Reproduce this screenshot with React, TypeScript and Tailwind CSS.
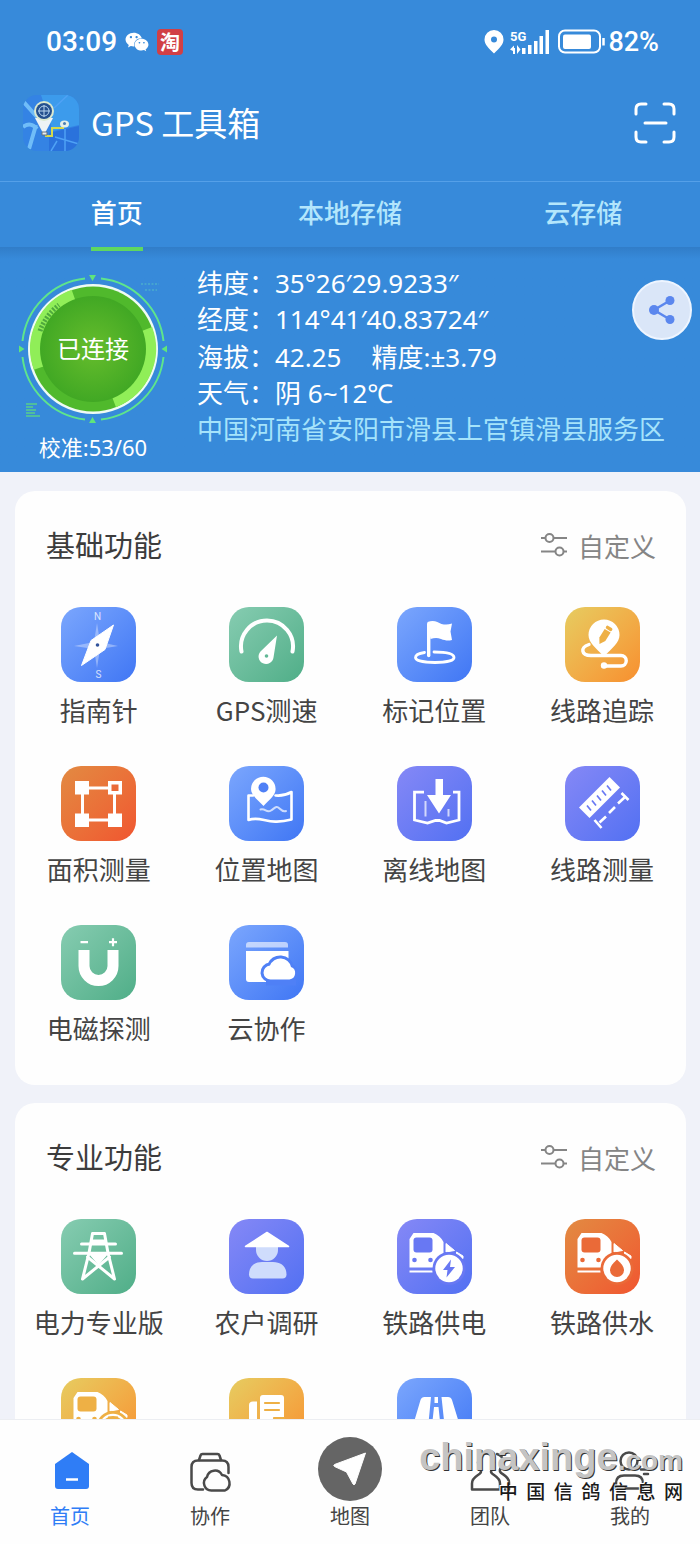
import type { ReactNode } from 'react'
import { FaWeixin } from 'react-icons/fa'

type Tone = 'blue' | 'green' | 'amber' | 'orange' | 'indigo'

interface Feature {
  name: string
  tone: Tone
  icon: ReactNode
  hideLabel?: boolean
}

const TONES: Record<Tone, string> = {
  blue: 'bg-linear-to-br from-[#7ba6fd] to-[#4076f4] text-[#4f80f6]',
  green: 'bg-linear-to-br from-[#86ccb1] to-[#4fae88] text-[#62b896]',
  amber: 'bg-linear-to-br from-[#e6cc60] to-[#f78f2e] text-[#eeb045]',
  orange: 'bg-linear-to-br from-[#e28a42] to-[#f05530] text-[#ea6a38]',
  indigo: 'bg-linear-to-br from-[#8588f6] to-[#5270f2] text-[#6878f3]',
}

const Tile = ({ children }: { children: ReactNode }) => (
  <svg viewBox="0 0 75 75" className="size-full" fill="none" aria-hidden="true">
    {children}
  </svg>
)

/* ---------- Iconos de funciones ---------- */

const CompassIcon = (
  <Tile>
    <path d="M36 16l3 19 18 4-18 3-3 19-3-19-20-3 20-4z" fill="#fff" opacity=".35" />
    <path d="M20.500 58.500L30 33.500 52.500 18 44 42.500z" fill="#fff" stroke="#fff" strokeLinejoin="round" />
    <circle cx="36.500" cy="38" r="1.800" fill="#33549c" />
    <text x="36.500" y="12.500" fontSize="10" fontFamily="Roboto, sans-serif" textAnchor="middle" fill="#fff" opacity=".75">N</text>
    <text x="37.500" y="70.500" fontSize="10" fontFamily="Roboto, sans-serif" textAnchor="middle" fill="#fff" opacity=".75">S</text>
  </Tile>
)

const GaugeIcon = (
  <Tile>
    <path d="M12.500 44.500A26 26 0 1 1 63.500 44.500" stroke="#fff" strokeWidth="4" strokeLinecap="round" />
    <path d="M48 28.500L44.500 50.500A7.500 7.500 0 1 1 31.500 44.500z" fill="#fff" />
    <circle cx="37.500" cy="49" r="1.800" fill="currentColor" />
  </Tile>
)

const FlagIcon = (
  <Tile>
    <path d="M37 45c11 0 20 1.500 20 5.500 0 3-8 5-19 5s-19.500-2-19.500-5c0-2.500 4-4.300 9-5" stroke="#fff" strokeWidth="2.800" strokeLinecap="round" />
    <path d="M31.700 17v31.500" stroke="#fff" strokeWidth="3.400" strokeLinecap="round" />
    <path d="M30.500 15c7-2.500 10 .5 14 2 4 1 7 .7 10.500-.5l-1.500 8 1.500 8.500c-4 1-7 .5-11-1s-7-1-10.500 0z" fill="#fff" />
  </Tile>
)

const RouteIcon = (
  <Tile>
    <path d="M24 37.500c-9 3-8 11 2 11h30a5 5 0 0 1 0 10.500H40" stroke="#fff" strokeWidth="3.400" strokeLinecap="round" />
    <path d="M39 49.500C31 41 23.500 36 23.500 28a15.500 15.500 0 0 1 31 0C54.500 36 47 41 39 49.500z" fill="#fff" />
    <g transform="translate(40 28) rotate(32)" fill="currentColor">
      <rect x="-3.500" y="-9.500" width="7" height="3.500" rx="1.500" />
      <path d="M-3.500-5h7V5L0 10.500-3.500 5z" />
    </g>
    <circle cx="39" cy="58.500" r="3.200" fill="#fff" />
  </Tile>
)

const AreaIcon = (
  <Tile>
    <path d="M21.500 22h32v32h-32z" stroke="#fff" strokeWidth="3" />
    <path d="M14 15h14v13.500H14zM14 47.500h14V61H14zM47 47.500h14V61H47zM47 15h14v13.500H47z" fill="#fff" />
    <path d="M50.500 18.500h7V25h-7z" fill="currentColor" />
  </Tile>
)

const MapPinIcon = (
  <Tile>
    <path d="M24 29.500h-4.500V54c13-5 19 6 43-.5V26c-7 4-11 4-16 3.500" stroke="#fff" strokeWidth="2.600" strokeLinejoin="round" strokeLinecap="round" />
    <path d="M31.500 43.500c5-1.500 6 4 10.500 1s5.500-5 8.500-2c2 2 4 3.500 6.500 2.500" stroke="#fff" strokeWidth="2" strokeLinecap="round" opacity=".7" />
    <path d="M34.500 40C28 33 22 29 22 23a12.300 12.300 0 0 1 24.600 0C46.600 29 41 33 34.500 40z" fill="#fff" />
    <circle cx="34.500" cy="21.500" r="5" fill="currentColor" />
  </Tile>
)

const OfflineMapIcon = (
  <Tile>
    <path d="M27 26.200h-9.500V54l13 3 8-2.700 4 .2 7 2.500 12.500-3V26.200H56" stroke="#fff" strokeWidth="2.800" />
    <path d="M28.500 35v15.500M51.500 43v7.500" stroke="#fff" strokeWidth="2" opacity=".7" />
    <path d="M38.500 13h7.500v16h8L42 47.500 30 29h8.500z" fill="#fff" />
  </Tile>
)

const RulerIcon = (
  <Tile>
    <path d="M14 41.500L44.500 11 55 21.500 24.500 52z" fill="#fff" />
    <path d="M22 39.500l4 5M27 34.500l4 5M32 29.500l4 5M37 24.500l4 5M42 19.500l4 5" stroke="currentColor" strokeWidth="1.700" />
    <path d="M34.500 56.500l6.500-6M44 47l6-6M53 37.500l6.500-6" stroke="#fff" strokeWidth="2.600" />
    <path d="M29.500 54l7 8M56.500 27l7 7" stroke="#fff" strokeWidth="2.600" />
  </Tile>
)

const MagnetIcon = (
  <Tile>
    <path d="M23 25v16a14.500 14.500 0 0 0 29 0V25" stroke="#fff" strokeWidth="11" />
    <path d="M19.500 17.200H27M48 17.200h8M52 13.200v8" stroke="#fff" strokeWidth="2.200" />
  </Tile>
)

const CloudFolderIcon = (
  <Tile>
    <path d="M17 22.500V20q0-3 3-3h36q3 0 3 3v2.500z" fill="#fff" opacity=".6" />
    <path d="M17 26h42.500v31H20q-3 0-3-3z" fill="#fff" />
    <path
      d="M42 54.500a7 7 0 0 1-1-14 11 11 0 0 1 21 1.500 6.500 6.500 0 0 1-1.500 12.500z"
      fill="#fff"
      stroke="currentColor"
      strokeWidth="6"
    />
    <path d="M37 57.500h30" stroke="currentColor" strokeWidth="6" />
    <path d="M42 54.500a7 7 0 0 1-1-14 11 11 0 0 1 21 1.500 6.500 6.500 0 0 1-1.500 12.500z" fill="#fff" />
  </Tile>
)

const TowerIcon = (
  <Tile>
    <path d="M20.500 25h34M13.500 34.300h47" stroke="#fff" strokeWidth="3" strokeLinecap="round" />
    <path d="M31.500 14.500h12L47 34l6.500 26-27-22M31.500 14.500L28 34l-6.500 26 27-22" stroke="#fff" strokeWidth="3" strokeLinejoin="round" strokeLinecap="round" />
    <path d="M30 20.500h15V25H30zM27 34h21l-10.500 12z" fill="#fff" />
  </Tile>
)

const FarmerIcon = (
  <Tile>
    <path d="M27 28h22v3a11 11 0 0 1-22 0z" fill="#cfdcfc" />
    <path d="M20 55.500c0-8 5-12.500 13-12.500h11c8 0 13.500 4.500 13.500 12.500 0 2.500-1.500 4-4 4H24c-2.500 0-4-1.500-4-4z" fill="#cfdcfc" />
    <path d="M38 13.500L59.500 27.500h-43z" fill="#fff" stroke="#fff" strokeWidth="1.500" strokeLinejoin="round" />
  </Tile>
)

const TrainBody = () => (
  <>
    <path d="M12.500 48.500V20L16.500 14h20c4 1.500 8 5 10 9v12c-5 2-9 7-9 13.500z" fill="#fff" />
    <path d="M49 24.500l8.500 7-8.500 1.500zM59.500 33l6.500 4v2.500l-6.500-3.500z" fill="#fff" stroke="#fff" strokeLinejoin="round" />
    <rect x="16.500" y="18.500" width="19" height="15" rx="3" fill="currentColor" />
    <circle cx="17.500" cy="41" r="2.300" fill="currentColor" />
    <circle cx="33.500" cy="41" r="2.300" fill="currentColor" />
    <path d="M12.500 52.500h23" stroke="#fff" strokeWidth="2" />
    <circle cx="52" cy="49.500" r="16.500" fill="currentColor" />
    <circle cx="52" cy="49.500" r="13.700" fill="#fff" />
  </>
)

const TrainPowerIcon = (
  <Tile>
    <TrainBody />
    <path d="M54 40.500l-8 10.500h4.500l-1 7.500 8.500-10.500h-5z" fill="currentColor" />
  </Tile>
)

const TrainWaterIcon = (
  <Tile>
    <TrainBody />
    <path d="M52 40.500c4 3.500 7 7 7 10.500a7 7 0 0 1-14 0c0-3.500 3-7 7-10.500z" fill="currentColor" />
  </Tile>
)

const TrainServiceIcon = (
  <Tile>
    <TrainBody />
    <circle cx="52" cy="49.500" r="10.500" stroke="currentColor" strokeWidth="2" />
    <path d="M47 40h10" stroke="currentColor" strokeWidth="3" />
  </Tile>
)

const NewsIcon = (
  <Tile>
    <path d="M20 56V27q0-3.500 4-3.500h4V56z" fill="#fff" />
    <rect x="31" y="17" width="24" height="42" rx="3" fill="#fff" />
    <path d="M36 25h14M36 32h14M45 40h10" stroke="currentColor" strokeWidth="2.200" strokeLinecap="round" />
  </Tile>
)

const RoadIcon = (
  <Tile>
    <path d="M23.500 22q1-3 4-3H34l-4 42H12zM55 22q-1-3-4-3h-6.500L49 61h18z" fill="#fff" />
    <path d="M37.500 19h3.500v6h-3.500zM37 29h4.500l1.500 14h-7.500z" fill="#fff" />
  </Tile>
)

const BASIC_FEATURES: Feature[] = [
  { name: '指南针', tone: 'blue', icon: CompassIcon },
  { name: 'GPS测速', tone: 'green', icon: GaugeIcon },
  { name: '标记位置', tone: 'blue', icon: FlagIcon },
  { name: '线路追踪', tone: 'amber', icon: RouteIcon },
  { name: '面积测量', tone: 'orange', icon: AreaIcon },
  { name: '位置地图', tone: 'blue', icon: MapPinIcon },
  { name: '离线地图', tone: 'indigo', icon: OfflineMapIcon },
  { name: '线路测量', tone: 'indigo', icon: RulerIcon },
  { name: '电磁探测', tone: 'green', icon: MagnetIcon },
  { name: '云协作', tone: 'blue', icon: CloudFolderIcon },
]

const PRO_FEATURES: Feature[] = [
  { name: '电力专业版', tone: 'green', icon: TowerIcon },
  { name: '农户调研', tone: 'indigo', icon: FarmerIcon },
  { name: '铁路供电', tone: 'indigo', icon: TrainPowerIcon },
  { name: '铁路供水', tone: 'orange', icon: TrainWaterIcon },
  { name: '铁路', tone: 'amber', icon: TrainServiceIcon, hideLabel: true },
  { name: '资讯', tone: 'amber', icon: NewsIcon, hideLabel: true },
  { name: '公路', tone: 'blue', icon: RoadIcon, hideLabel: true },
]

const StatusBar = () => (
  <div className="flex h-[84px] items-center justify-between pr-[41px] pl-[46px] font-['Roboto','Noto_Sans_CJK_SC',sans-serif]">
    <div className="flex items-center gap-2">
      <span className="text-[28px] leading-8 font-medium">03:09</span>
      <FaWeixin className="size-6" />
      <span className="flex h-[26px] w-[26px] items-center justify-center rounded-sm bg-[#d13f45] font-['Noto_Sans_CJK_SC',sans-serif] text-xl leading-5 font-bold">
        淘
      </span>
    </div>
    <div className="flex items-center">
      <svg width="20" height="24" viewBox="0 0 20 24" aria-hidden="true">
        <path d="M10 0a9.500 9.500 0 0 1 9.500 9.500c0 5-4 8.500-9.500 14-5.500-5.500-9.500-9-9.500-14A9.500 9.500 0 0 1 10 0z" fill="#fff" />
        <circle cx="10" cy="9.500" r="3" fill="#378ada" />
      </svg>
      <svg width="40" height="26" viewBox="0 0 40 26" className="ml-1.5" fill="#fff" aria-hidden="true">
        <text x="0" y="12" fontSize="13" fontWeight="700" fontFamily="Roboto, sans-serif">5G</text>
        <path d="M0 20.500l4-4v2.500h1V25H3v-3zM7 16v9l3.500-4.500z" />
        <path d="M12 19h3.500v6H12zM18 16h3.500v9H18zM24 12h3.500v13H24zM29.500 7H33v18h-3.500zM35.500 1H39v24h-3.500z" />
      </svg>
      <svg width="48" height="26" viewBox="0 0 48 26" className="ml-2" fill="none" aria-hidden="true">
        <rect x="1" y="1.500" width="41" height="22" rx="6" stroke="#fff" strokeWidth="2" />
        <rect x="5" y="5.500" width="28" height="14.500" rx="2" fill="#fff" />
        <path d="M45.500 9v7.500" stroke="#fff" strokeWidth="2.500" />
      </svg>
      <span className="ml-0.5 text-[27px] leading-8 font-medium">82%</span>
    </div>
  </div>
)

const AppLogo = () => (
  <svg viewBox="0 0 56 56" className="size-14 shrink-0" fill="none" aria-hidden="true">
    <defs>
      <clipPath id="logo-clip">
        <rect width="56" height="56" rx="14" />
      </clipPath>
    </defs>
    <g clipPath="url(#logo-clip)">
      <path d="M0 0h56v56H0z" fill="#3483e4" />
      <path d="M18 0h38v30L30 36z" fill="#3c9bec" />
      <path d="M26 38l30-7v25H26z" fill="#2a72dc" />
      <path d="M-1 5l15 17M0 32c5-4 10-3 14 2M13 30L6 54" stroke="#70bdf8" strokeWidth="4" />
      <path d="M31 13L45 0M34 46l-6 10M42 34v22M32 42l24 7" stroke="#4fa2f5" strokeWidth="1.500" />
      <path d="M22 41h7v-8h12" stroke="#d6d94b" strokeWidth="2" />
      <path d="M21 40L12 23h18z" fill="#eef3f5" />
      <circle cx="21" cy="16" r="10" fill="#dbe9cf" />
      <circle cx="21" cy="16" r="8" fill="#24508f" />
      <circle cx="21" cy="16" r="5" stroke="#b8d5ef" />
      <path d="M21 10v12M15 16h12" stroke="#b8d5ef" />
      <ellipse cx="41.500" cy="29" rx="4.500" ry="3.500" fill="#e6efe9" />
      <circle cx="41.500" cy="28.500" r="1.500" fill="#4b7fb5" />
      <path d="M19 37h5v3h-5z" fill="#e9eef2" stroke="#66727c" />
    </g>
  </svg>
)

const TABS = ['首页', '本地存储', '云存储']

const ConnectionDial = () => (
  <div className="relative size-[150px]">
    <svg viewBox="0 0 150 150" className="size-full" fill="none" aria-hidden="true">
      <defs>
        <radialGradient id="dial">
          <stop offset="0" stopColor="#66bd2c" />
          <stop offset="1" stopColor="#41a824" />
        </radialGradient>
      </defs>
      {/* Anillo exterior */}
      <g stroke="#5ee58c" strokeWidth="2">
        <path d="M83 4.500A71 71 0 0 1 145.500 67" />
        <path d="M145.500 83A71 71 0 0 1 83 145.500" />
        <path d="M67 145.500A71 71 0 0 1 4.500 83" />
        <path d="M4.500 67A71 71 0 0 1 67 4.500" />
      </g>
      <path d="M71 1h7l-3.500 6zM71 149h7l-3.500-6zM1 71.500v7l5.500-3.500zM149 71.500v7l-5.500-3.500z" fill="#5fe57b" />
      <circle cx="75" cy="75" r="65" fill="#effbf4" />
      <circle cx="75" cy="75" r="62.500" fill="#50b92c" />
      {/* Segmentos claros */}
      <g stroke="#90ee58" strokeWidth="11">
        <path d="M55.500 21A57 57 0 0 0 21 94" />
        <path d="M129 55A57 57 0 0 1 96 128" />
      </g>
      <path d="M22 57A57 57 0 0 1 41 31" stroke="#4fa93e" strokeWidth="5" strokeDasharray="2 1.500" />
      <circle cx="75" cy="75" r="53" fill="url(#dial)" />
      <path d="M123 10h18M127 16h12" stroke="#4fb6c9" strokeWidth="2" strokeDasharray="2 1.500" opacity=".6" />
      <path d="M8 130h11M8 133h7M8 136h10M8 139h9M8 142h14" stroke="#58cf8c" strokeWidth="1.500" />
    </svg>
    <span className="absolute inset-0 flex items-center justify-center text-2xl">已连接</span>
  </div>
)

const InfoPanel = () => (
  <section className="relative flex bg-linear-to-b from-[#317dc8] to-[#378ada] to-[12px] pt-[18px] pb-[9px] font-['Noto_Sans','Noto_Sans_CJK_SC',sans-serif]">
    <div className="flex w-[197px] shrink-0 flex-col items-center gap-[7px] pt-[9px] pr-[11px]">
      <ConnectionDial />
      <p className="text-[22px] leading-8">校准:53/60</p>
    </div>
    <div className="flex flex-col gap-0.5 text-[26px] leading-9">
      <div>
        <p>纬度：35°26′29.9233″</p>
        <p>经度：114°41′40.83724″</p>
      </div>
      <div>
        <p className="flex gap-[30px]">
          <span>海拔：42.25</span>
          <span>精度:±3.79</span>
        </p>
        <p>天气：阴 6~12℃</p>
        <p className="text-[#a5e3fb]">中国河南省安阳市滑县上官镇滑县服务区</p>
      </div>
    </div>
    <button
      type="button"
      aria-label="分享"
      className="absolute top-[33px] right-2 flex size-[60px] items-center justify-center rounded-full border-2 border-[#eef5ff] bg-[#dae6f8]"
    >
      <svg viewBox="0 0 28 28" className="size-7" fill="#5b87ee" aria-hidden="true">
        <path d="M22 4.500L6 14l16 9.500" stroke="#5b87ee" strokeWidth="2.500" fill="none" />
        <circle cx="22" cy="4.500" r="4.500" />
        <circle cx="6" cy="14" r="5" />
        <circle cx="22" cy="23.500" r="4.500" />
      </svg>
    </button>
  </section>
)

const FeatureCard = ({ title, features }: { title: string; features: Feature[] }) => (
  <section className="rounded-[20px] bg-[#fefefe] pt-8 pb-[38px]">
    <div className="flex h-11 items-center justify-between pr-[30px] pl-[31px]">
      <h2 className="text-[29px] text-[#3c3c3c]">{title}</h2>
      <button type="button" className="flex items-center gap-2.5 text-[26px] text-[#858585]">
        <svg viewBox="0 0 28 24" className="h-6 w-7" fill="none" stroke="#858585" strokeWidth="2" aria-hidden="true">
          <path d="M1 5h4.500M13.500 5H27M1 18.500h14.500M23.500 18.500H27" />
          <circle cx="9.500" cy="5" r="4" />
          <circle cx="19.500" cy="18.500" r="4" />
        </svg>
        自定义
      </button>
    </div>
    <div className="mt-10 grid grid-cols-4 gap-y-[37px]">
      {features.map((feature) => (
        <button
          key={feature.name}
          type="button"
          aria-label={feature.name}
          className="flex flex-col items-center gap-[9px]"
        >
          <span className={`block size-[75px] rounded-[20px] ${TONES[feature.tone]}`}>{feature.icon}</span>
          {!feature.hideLabel && (
            <span className="text-[26px] leading-[38px] whitespace-nowrap text-[#444]">{feature.name}</span>
          )}
        </button>
      ))}
    </div>
  </section>
)

/* ---------- Barra inferior ---------- */

const NAV_ITEMS: { name: string; active?: boolean; icon: ReactNode }[] = [
  {
    name: '首页',
    active: true,
    icon: (
      <>
        <path d="M34 15L51 27v22q0 3-3 3H20q-3 0-3-3V27z" fill="#2f7df6" />
        <path d="M28 42.500h12" stroke="#fff" strokeWidth="2.500" />
      </>
    ),
  },
  {
    name: '协作',
    icon: (
      <g stroke="#4a4a4a" strokeWidth="2.500" strokeLinecap="round" strokeLinejoin="round">
        <path d="M21 23l1.500-4.500q.5-1.500 2-1.500h15q1.500 0 2 1.500L43 23" />
        <path d="M25 52.500h-5q-6.500 0-6.500-6.500V30q0-6.500 6.500-6.500h24q6.500 0 6.500 6.500v6" />
        <path d="M34 53.500a7.500 7.500 0 0 1-5-13.500 8 8 0 0 1 15-2 8.200 8.200 0 0 1 3 15.500z" />
      </g>
    ),
  },
  {
    name: '地图',
    icon: (
      <>
        <circle cx="32" cy="32" r="32" fill="#656565" />
        <path d="M47.500 16L16.500 27.500q-1.500 1 0 2l12 5.500 6.500 12q1 1.500 2 0z" fill="#fff" stroke="#fff" strokeLinejoin="round" />
      </>
    ),
  },
  {
    name: '团队',
    icon: (
      <g stroke="#4a4a4a" strokeWidth="2.500" strokeLinejoin="round" strokeLinecap="round">
        <path d="M28 16.500c5 0 8 4 8 9 0 4-3 6-3 9 0 4 9 4 9 12v6H14v-6c0-8 9-8 9-12 0-3-3-5-3-9 0-5 3-9 8-9z" />
        <path d="M39 17c4 1 6 4 6 8 0 5-4 6-3 9.500 1 3 9 4 9 11v7h-4" />
      </g>
    ),
  },
  {
    name: '我的',
    icon: (
      <g stroke="#4a4a4a" strokeWidth="2.500" strokeLinejoin="round" strokeLinecap="round">
        <circle cx="31" cy="24" r="8.500" />
        <path d="M18 51.500v-5q0-8 8-8h11q8 0 8 8v5z" />
        <path d="M43 32.500h7M46 37h4" />
      </g>
    ),
  },
]

const Watermark = () => (
  <div className="pointer-events-none absolute top-[17px] right-[17px] text-right text-[#c4c4c4] [text-shadow:1px_1px_0_#333]">
    <p className="font-['Liberation_Sans',sans-serif] text-[38px] leading-10 font-bold">
      chinaxinge<span className="text-[28px]">.com</span>
    </p>
    <p className="text-[19px] leading-5 font-medium whitespace-pre text-[#1a1a1a] [text-shadow:-1px_-1px_0_#fff]">
      中  国  信  鸽  信  息  网
    </p>
  </div>
)

const BottomNav = () => (
  <nav className="relative grid shrink-0 grid-cols-5 border-t border-[#eceef2] bg-[#fefefe] pt-[17px] pb-[13px]">
    {NAV_ITEMS.map((item) => (
      <a
        key={item.name}
        href="#"
        className={`flex flex-col items-center text-xl leading-[30px] ${item.active ? 'text-[#2f7df6]' : 'text-[#444]'}`}
      >
        <svg viewBox="0 0 64 64" className="size-16" fill="none" aria-hidden="true">
          {item.icon}
        </svg>
        {item.name}
      </a>
    ))}
    <Watermark />
  </nav>
)

export default function App() {
  return (
    <div className="flex h-screen flex-col bg-[#f0f2f9] font-['Noto_Sans_CJK_SC',sans-serif]">
      <header className="shrink-0 bg-[#378ada] text-white">
        <StatusBar />
        <div className="flex h-[97px] items-center justify-between pr-6 pb-5 pl-[23px]">
          <div className="flex items-center gap-3">
            <AppLogo />
            <h1 className="text-[33px]">GPS 工具箱</h1>
          </div>
          <button type="button" aria-label="扫一扫">
            <svg viewBox="0 0 42 42" className="size-[42px]" fill="none" stroke="#fff" strokeWidth="3" strokeLinecap="round" aria-hidden="true">
              <path d="M2 12V7q0-5 5-5h5M30 2h5q5 0 5 5v5M40 30v5q0 5-5 5h-5M12 40H7q-5 0-5-5v-5M11 21h21" />
            </svg>
          </button>
        </div>
        <div className="grid h-[66px] grid-cols-3 border-t border-[#55a0e8]" role="tablist">
          {TABS.map((tab, index) => (
            <button
              key={tab}
              type="button"
              role="tab"
              aria-selected={index === 0}
              className={`relative flex items-center justify-center pb-1.5 text-[26px] font-medium ${index === 0 ? 'text-white' : 'text-[#b3e6fc]'}`}
            >
              {tab}
              {index === 0 && <span className="absolute -bottom-1 z-10 h-1 w-[52px] bg-[#5fd75f]" />}
            </button>
          ))}
        </div>
        <InfoPanel />
      </header>

      <main className="flex min-h-0 flex-1 flex-col gap-[18px] overflow-y-auto pt-[19px] pr-[14px] pl-[15px] [scrollbar-width:none]">
        <FeatureCard title="基础功能" features={BASIC_FEATURES} />
        <FeatureCard title="专业功能" features={PRO_FEATURES} />
      </main>

      <BottomNav />
    </div>
  )
}
